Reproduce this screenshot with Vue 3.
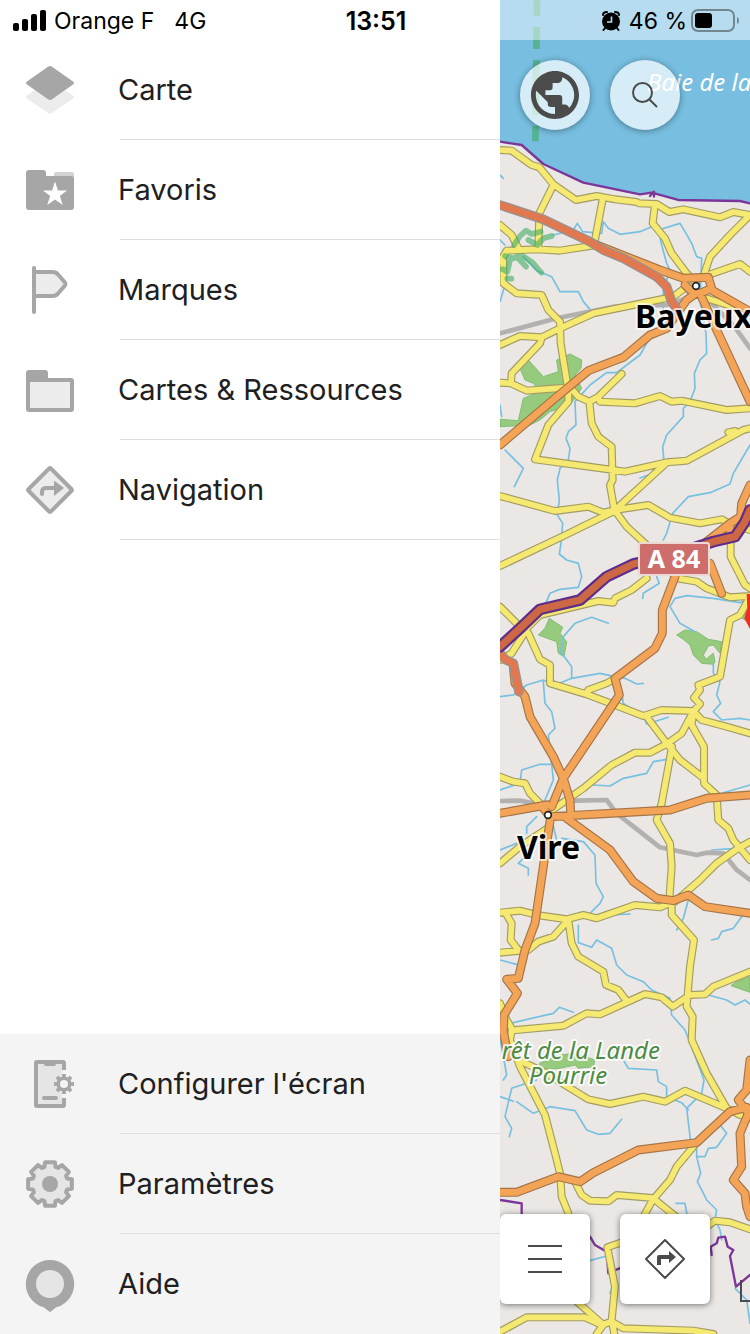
<template>
  <div class="screen">
    <header class="status-bar">
      <div class="status-left">
        <svg class="signal" viewBox="0 0 33 21" aria-hidden="true">
          <rect x="0" y="13" width="6" height="8" rx="2" />
          <rect x="9" y="9" width="6" height="12" rx="2" />
          <rect x="18" y="4" width="6" height="17" rx="2" />
          <rect x="27" y="0" width="6" height="21" rx="2" />
        </svg>
        <span>Orange F</span>
        <span class="network">4G</span>
      </div>
      <time class="clock">13:51</time>
      <div class="status-right">
        <svg class="alarm" viewBox="0 0 18 20" aria-hidden="true">
          <path d="M1 4Q1 1 5 1M17 4Q17 1 13 1M3 17L1.500 19M15 17L16.500 19" fill="none" stroke="#000" stroke-width="2" stroke-linecap="round" />
          <circle cx="9" cy="10.500" r="9" />
          <path d="M9.500 5.500V11H5" fill="none" stroke="#b9dff0" stroke-width="1.600" />
        </svg>
        <span class="charge">46 %</span>
        <svg class="battery" viewBox="0 0 48 24" aria-hidden="true">
          <rect x="1" y="1" width="42" height="21" rx="6" fill="none" stroke="#71868f" stroke-width="2" />
          <rect x="4" y="4" width="17" height="15" rx="3" />
          <path d="M46 8Q48 9 48 11.500T46 15Z" fill="#71868f" />
        </svg>
      </div>
    </header>

    <aside class="drawer">
      <nav aria-label="Menu">
        <ul class="menu">
          <li v-for="item in mainItems" :key="item.icon" class="menu-item">
            <a href="#" class="menu-link">
              <svg class="menu-icon" viewBox="0 0 48 48" aria-hidden="true">
                <template v-if="item.icon === 'layers'">
                  <path d="M26 15.500L47 29.500Q49 31 47 32.500L26 47Q24 48.500 22 47L1 32.500Q-1 31 1 29.500L22 15.500Z" fill="#ececec" />
                  <path d="M26 .8L47 15.500Q49 17 47 18.500L26 33.200Q24 34.800 22 33.200L1 18.500Q-1 17 1 15.500L22 .8Q24 -.7 26 .8Z" fill="#a6a6a6" />
                </template>
                <template v-else-if="item.icon === 'favorites'">
                  <path d="M28 14V8Q28 6 30 6H46Q48 6 48 8V14Z" fill="#d2d2d2" />
                  <path d="M3 4H17Q20 4 20 7V10H45Q48 10 48 13V41Q48 44 45 44H3Q0 44 0 41V7Q0 4 3 4Z" fill="#a6a6a6" />
                  <path d="M29 15.500L32 24.500H41L33.800 30L36.800 39L29 33.500L21.200 39L24.200 30L17 24.500H26Z" fill="#fff" />
                </template>
                <template v-else-if="item.icon === 'flag'">
                  <path d="M8 6H27Q30 6 32 8.500L39 16.500Q40 18 39 19.500L32 27.500Q30 30 27 30H8Z" class="outline" />
                  <path d="M8 2V46" class="outline" />
                </template>
                <template v-else-if="item.icon === 'folder'">
                  <path d="M3 4H19Q22 4 22 7V16H0V7Q0 4 3 4Z" fill="#a6a6a6" />
                  <rect x="2" y="14" width="44" height="30" rx="1" class="outline" />
                </template>
                <template v-else>
                  <path d="M25 2.700L45.300 23Q46.300 24 45.300 25L25 45.300Q24 46.300 23 45.300L2.700 25Q1.700 24 2.700 23L23 2.700Q24 1.700 25 2.700Z" class="outline" />
                  <path d="M16 28V26Q16 22 20 22H30" fill="none" stroke="#a6a6a6" stroke-width="4" stroke-linecap="round" />
                  <path d="M28 14.500L38 22L28 30Z" fill="#a6a6a6" />
                </template>
              </svg>
              <span>{{ item.label }}</span>
            </a>
          </li>
        </ul>
      </nav>

      <ul class="menu menu-bottom">
        <li v-for="item in bottomItems" :key="item.icon" class="menu-item">
          <a href="#" class="menu-link">
            <svg class="menu-icon" viewBox="0 0 48 48" aria-hidden="true">
              <template v-if="item.icon === 'screen'">
                <path d="M10 2H36V46H10Z" fill="#e5e5e5" />
                <path d="M38 10V3Q38 2 37 2H11Q10 2 10 3V45Q10 46 11 46H37Q38 46 38 45V38" fill="none" stroke="#a6a6a6" stroke-width="4" />
                <path d="M18 3H30V4Q30 6 28 6H20Q18 6 18 4Z" fill="#a6a6a6" />
                <path d="M18 38H30" stroke="#a6a6a6" stroke-width="4" stroke-linecap="round" />
                <path d="M36 10H40V38H36Z" fill="#f4f4f4" />
                <path :d="smallGear" fill="#a6a6a6" />
                <circle cx="38" cy="24" r="4" fill="#f4f4f4" />
              </template>
              <template v-else-if="item.icon === 'settings'">
                <path :d="bigGear" class="outline" />
                <circle cx="24" cy="24" r="8" fill="#a6a6a6" />
              </template>
              <template v-else>
                <path d="M24 0A24 24 0 0 1 31 47Q29 47.500 27.500 49.500L24 52L20.500 49.500Q19 47.500 17 47A24 24 0 0 1 24 0Z" fill="#a6a6a6" />
                <circle cx="24" cy="24" r="14" fill="#e5e5e5" />
              </template>
            </svg>
            <span>{{ item.label }}</span>
          </a>
        </li>
      </ul>
    </aside>

    <main class="map">
      <svg class="map-canvas" viewBox="0 0 250 1334" preserveAspectRatio="xMinYMin slice" role="img" aria-label="Carte">
        <!-- roads are stored at three units per map pixel -->
        <g transform="scale(.33333)">
          <rect width="750" height="4002" fill="#ebe7e4" />
          <path d="M0 0H750V608L720 603H535L455 578L420 583L250 548L130 492L65 435L0 425Z" fill="#77bee0" />
          <path d="M111 0L106 424" stroke="#54b392" stroke-width="20" stroke-dasharray="66 33" stroke-dashoffset="18" fill="none" />
          <path v-for="(d, i) in forests" :key="'f' + i" :d="d" class="forest" />
          <g class="roads">
            <path v-for="(d, i) in streams" :key="'s' + i" :d="d" stroke="#76c0e2" stroke-width="5" />
            <path v-for="(d, i) in railways" :key="'r' + i" :d="d" stroke="#b3b1b0" stroke-width="14" />
            <path :d="borders" stroke="#7b3699" stroke-width="7" />
            <path :d="minor" stroke="#a39d63" stroke-width="24" />
            <path :d="minor" stroke="#f5e971" stroke-width="17" />
            <path :d="major" stroke="#a47548" stroke-width="27" />
            <path :d="major" stroke="#f4a457" stroke-width="20" />
            <path :d="trunk" stroke="#999390" stroke-width="29" />
            <path :d="trunk" stroke="#e2784f" stroke-width="21" />
            <path :d="motorway" stroke="#5c2d8c" stroke-width="35" />
            <path :d="motorway" stroke="#cc6843" stroke-width="22" />
          </g>
          <path v-for="(d, i) in marshes" :key="'m' + i" :d="d" class="marsh" />
          <path d="M740 1782H750V1887L733 1855L742 1825Z" fill="#f02d20" />
          <circle cx="588" cy="858" r="10" class="town" />
          <circle cx="144" cy="2445" r="10" class="town" />
          <path d="M723 3840V3903H750" fill="none" stroke="#4b4b4b" stroke-width="6" />
        </g>
        <rect x="139" y="543" width="70" height="32" rx="2" fill="#cd6e6c" stroke="#ebd9d5" stroke-width="2" />
        <text x="174" y="568" class="shield">A 84</text>
        <text x="147" y="91" class="sea">Baie de la</text>
        <text x="135" y="328" class="city">Bayeux</text>
        <text x="17" y="859" class="city">Vire</text>
        <text x="160" y="1059" class="wood wood-end">rêt de la Lande</text>
        <text x="68" y="1084" class="wood wood-mid">Pourrie</text>
      </svg>

      <div class="map-controls">
        <div class="round-buttons">
          <button type="button" class="round-button" aria-label="Sources de carte">
            <svg class="globe" viewBox="2 2 20 20">
              <path d="M12 2C6.480 2 2 6.480 2 12s4.480 10 10 10 10-4.480 10-10S17.520 2 12 2zm0 17.930c-4.400 0-8-3.500-8-7.930 0-.62.08-1.210.21-1.790L9 15v1c0 1.100.9 1 2 1h1v2.930zm5.900-2.540c-.26-.81-1-1.390-1.900-1.390h-1v-3c0-.55-.45-1-1-1H8v-2h2c.55 0 1-.45 1-1V7h2c1.100 0 2-.9 2-2v-.41c2.930 1.190 5 4.060 5 7.410 0 2.080-.8 3.970-2.100 5.390z" fill="#4b4b4b" />
            </svg>
          </button>
          <button type="button" class="round-button" aria-label="Rechercher">
            <svg class="search" viewBox="0 0 26 26">
              <circle cx="10.500" cy="10.500" r="9.500" />
              <path d="M17 17L25 25" />
            </svg>
          </button>
        </div>
        <div class="square-buttons">
          <button type="button" class="square-button" aria-label="Menu">
            <svg class="burger" viewBox="0 0 34 28">
              <path d="M0 1H34M0 14H34M0 27H34" />
            </svg>
          </button>
          <button type="button" class="square-button" aria-label="Navigation">
            <svg class="directions" viewBox="0 0 40 40">
              <path d="M20 1L39 20L20 39L1 20Z" fill="none" stroke="#4b4b4b" stroke-width="2" stroke-linejoin="round" />
              <path d="M12 26V18Q12 16 14 16H24V12L31 18L24 24V20H16V26Z" fill="#4b4b4b" />
            </svg>
          </button>
        </div>
      </div>
    </main>
  </div>
</template>

<script setup>
const mainItems = [
  { icon: 'layers', label: 'Carte' },
  { icon: 'favorites', label: 'Favoris' },
  { icon: 'flag', label: 'Marques' },
  { icon: 'folder', label: 'Cartes & Ressources' },
  { icon: 'navigation', label: 'Navigation' }
]

const bottomItems = [
  { icon: 'screen', label: "Configurer l'écran" },
  { icon: 'settings', label: 'Paramètres' },
  { icon: 'help', label: 'Aide' }
]

// eight teeth, one every 45 degrees
const gearPath = (cx, cy, outer, inner, tip, base) => {
  const points = []
  for (let i = 0; i < 8; i++) {
    const steps = [[-base, inner], [-tip, outer], [tip, outer], [base, inner]]
    steps.forEach(([offset, r]) => {
      const a = ((i * 45 + offset) * Math.PI) / 180
      points.push(`${(cx + r * Math.sin(a)).toFixed(2)} ${(cy - r * Math.cos(a)).toFixed(2)}`)
    })
  }
  return 'M' + points.join('L') + 'Z'
}

const bigGear = gearPath(24, 24, 22.4, 18, 12.5, 18)
const smallGear = gearPath(38, 24, 10.2, 7.6, 11, 14)

const forests = [
  'M62 1110L85 1080L130 1130L175 1115L170 1080L210 1062L245 1080L243 1105L225 1125L245 1165L210 1215L150 1235L120 1260L90 1275L0 1280V1258L55 1262L70 1195L120 1175L100 1150L75 1140Z',
  'M115 1905L135 1885L148 1855L188 1882L180 1900L200 1925L192 1970L175 1960L170 1925Z',
  'M530 1905L555 1890L590 1895L625 1918L665 1925L660 1960L640 1935L625 1938L610 1965L618 1978L640 1960L645 1985L640 1993L605 1990L580 1965L570 1935L550 1918Z',
  'M118 3190L180 3165L225 3160L285 3180L280 3200L235 3205L225 3195L180 3205L125 3210Z',
  'M750 2930L710 2945L693 2957L750 2977Z',
  'M750 1830L720 1850L750 1870Z'
]

const marshes = [
  'M42 735L60 708L78 692L95 702L122 695M85 720L112 735L130 715L155 708',
  'M15 768L40 775L68 768L98 788L112 805L124 818M50 770L78 800M30 780L22 815L8 808',
  'M22 836L34 836'
]

const streams = [
  'M0 525L10 535',
  'M0 720L15 735M20 765L15 855L0 905M70 770L110 812L155 830L180 875L235 875L250 905L270 928',
  'M160 705L220 690L232 670L248 695L305 700L310 665L325 685L360 703L420 695L455 680L475 690L485 735L500 790L510 810L490 870L490 960L440 1030L420 1065L350 1118L320 1118L270 1155L225 1205L228 1275L205 1295L198 1315L210 1345L205 1380L180 1405L172 1440L178 1500L172 1545L188 1570L183 1630L178 1662L200 1680L235 1690L245 1730L235 1762L180 1768L150 1780L135 1815',
  'M475 690L540 670L555 695L575 730L590 770L605 775L600 900L618 1000L620 1060L600 1080L583 1120L585 1165L570 1205L550 1225L550 1250L500 1305L488 1340L492 1385',
  'M15 1350L70 1405L43 1460M750 1335L700 1420L690 1452L630 1478L565 1490L518 1540L500 1600L490 1620',
  'M420 1434L460 1420M0 1215L5 1250M470 1730L478 1750L430 1780L428 1795M510 1820L525 1795L560 1787L640 1795L720 1808L750 1798M510 1820L540 1870L585 1895',
  'M325 1870L275 1852L225 1870L190 1910L182 1955L215 2000L215 2035L300 2020L345 2030L375 2035L410 2052L430 2050M215 2035L165 2055L130 2040L80 2055L40 2085L0 2090M130 2045L135 2110L155 2135L165 2185L145 2205L155 2290L160 2340L135 2400M360 2050L370 2110L430 2150L440 2172L505 2152',
  'M0 2370L60 2350L65 2310L120 2293L155 2293M520 2275L460 2285L440 2320L370 2335L330 2358L280 2355M640 1990L640 2020L660 2045L650 2085L662 2110L640 2135L665 2160L720 2155L750 2160M665 2380L750 2355',
  'M110 2450L80 2480V2500M0 2550L50 2530M85 2625V2605L55 2590L70 2575M160 2480L170 2520M185 2515L250 2525L285 2565L288 2650L310 2690L300 2710L270 2740M330 2745L390 2742M565 2700L550 2755L530 2790M725 2750L700 2785L665 2795L655 2815L635 2820M635 2550L710 2545M235 2775V2828L275 2842L290 2820L335 2845L350 2895L380 2925L430 2945L455 2970L510 2995L515 3045L555 3090L575 3140L612 3240L605 3280L560 3325L575 3450',
  'M0 2880L50 2893M30 3070L160 3040L178 3022L220 3037M625 2985L680 3000L705 3015L735 3000L750 3012M330 3165L370 3180L385 3205L470 3210L475 3245L500 3260L500 3290L545 3308L565 3330',
  'M0 3115L10 3170L20 3225L10 3240M110 3240L35 3265L15 3350L35 3385L28 3410M0 3290L40 3304M50 3305L100 3340L150 3320L225 3332L260 3390L295 3403L330 3400L365 3358M590 3430V3470H615L625 3445L650 3442L680 3400L660 3375M590 3470L602 3520L592 3545L605 3570L620 3600L650 3630L645 3660L660 3690L665 3720M528 3610H555L562 3650M270 3782L320 3768M340 3850L330 3880M705 3865L740 3900L750 3970'
]

const railways = [
  'M0 1000L170 955L340 920L500 915L590 885',
  'M620 895L700 975L750 1045',
  'M0 2403L60 2402L100 2410L230 2402L320 2400L350 2440L480 2542L590 2565L620 2558L670 2560L710 2610L750 2640'
]

const borders = 'M0 425L65 435L130 492L250 548L420 583L455 578L535 600L720 603L750 610M450 588L462 575V590M0 3600L65 3610V3650M270 3710L285 3735L320 3755L325 3820L370 3800M635 3765L632 3740L650 3730L655 3713L675 3710L683 3740L700 3750L690 3768L708 3860L750 3825'

const minor = [
  'M0 450L35 452L95 495L118 502L160 553L228 600L290 588L345 598L410 606M418 610L470 612L508 636L550 628L660 652L700 636L750 645',
  'M160 555L118 640L115 740M308 598L285 720M465 612L458 670L495 715L515 760L560 820L588 850M750 645L690 705L630 770L610 830L720 792L750 815',
  'M0 675L35 705L55 745M0 785L20 752L110 748L180 752L290 735M10 785V850L50 880L125 885L145 930L180 965L182 1030L203 1160',
  'M0 1035L60 1008L125 1012L180 985L280 940L400 915L520 890L560 860M125 1012L120 1030L35 1120L33 1150M0 1148L33 1150L80 1172L210 1162L235 1190L268 1205L295 1190L365 1122',
  'M295 1195L300 1205L405 1210L480 1188L515 1205L545 1202L680 1230L750 1225M205 1165V1205L145 1275L105 1378L340 1410L375 1415L500 1387L560 1382L730 1290L750 1285',
  'M268 1205L275 1270L295 1310L335 1340L338 1440L330 1455L343 1530M500 1388L345 1530M0 1488L165 1533L265 1520L310 1538L345 1530L445 1515L510 1553L600 1570L665 1558L690 1572L750 1590',
  'M0 1698L190 1608L345 1532L380 1580L440 1635L530 1735L590 1745L620 1765L690 1792L750 1788M692 1580V1670L735 1755L750 1765M620 895L700 920M685 1297L705 1293',
  'M440 1735L395 1770L345 1795L340 1808L295 1803L120 1845L85 1880L35 1960L0 1980M0 1820L60 1880L85 1900L120 1978L150 1995V2050L260 2083L345 2115L430 2148L485 2130L580 2133L605 2160L680 2180L750 2200',
  'M260 2080L265 2070L320 2050L345 2035M745 1800L720 1845L690 1860L660 2030L595 2055L600 2070L582 2093L600 2112L580 2135L545 2200L500 2232L450 2258H405L335 2295L250 2365L200 2400L150 2435',
  'M440 2150L500 2230L540 2280L605 2330M580 2135L575 2175L612 2240V2350L650 2385L655 2460L685 2485L700 2520L750 2580M516 2240L485 2410L470 2460L510 2530L515 2600L508 2700',
  'M0 2330L40 2345L75 2350L90 2380L125 2415M0 2590L60 2540L150 2480M750 2525L710 2548L650 2590L600 2640L525 2705',
  'M0 2738L60 2732L110 2745L200 2758L250 2745L290 2755L405 2715L480 2722L520 2705M20 2745L35 2770L32 2820L55 2850M0 2858L85 2850L115 2825L160 2810L205 2760L215 2830L235 2870L310 2915L318 2955L355 2970L380 3003',
  'M515 2710V2745L582 2820L570 2900L560 3020L578 3050L575 3120L620 3220L680 3325M0 3010L20 3060L38 3091L190 3077L260 3040L300 3043L435 2982L485 2992L518 3020L570 2985L615 2983L640 2960L750 2915',
  'M35 3092L30 3120L60 3200L135 3345L165 3460L180 3520L185 3590L205 3640V3680M55 3180L130 3215L265 3298L330 3312L430 3290L495 3305L555 3272L680 3325L720 3345L750 3350',
  'M580 3440L530 3500L510 3540L458 3600L425 3660M225 3545L245 3585L270 3602L325 3604L350 3585L458 3594L540 3660M620 3680L645 3662L690 3667L750 3688',
  'M370 3725L322 3742L345 3860L335 3960L343 4002M0 3995L80 3952L255 3952L305 3975L335 3965L370 3985L580 3992L640 4002M225 3900L310 3975L290 4002'
].join('')

const major = [
  'M0 1335L165 1195L265 1112L370 1072L450 1005L500 985L560 900L588 880M290 735L480 810L550 835L625 832L635 865L600 880L570 870L555 855M635 870L750 935M600 880L650 990L750 1205',
  'M750 1455L725 1510L722 1550L690 1570L620 1625M690 1570V1610M630 1690L665 1780M525 1730L487 1830V1900L465 1945L345 2035L358 2085L190 2335L155 2420',
  'M40 2000L45 2050L75 2090L90 2150L160 2270L190 2335L210 2400L212 2440L200 2455M0 2440L140 2415M125 2418L150 2450L510 2430L620 2395L750 2385',
  'M200 2455L330 2550L400 2645L470 2695L520 2702L565 2685L615 2720L750 2740M152 2450L105 2770L75 2850L55 2935L20 2938L52 2980L12 3045L10 3095L25 3170',
  'M0 3577L50 3577L175 3530L240 3545L280 3518L415 3450L590 3428L690 3335L740 3322L750 3330M750 3180L740 3270L715 3300L745 3340L720 3400L725 3500L700 3540L735 3580L740 3620L750 3650'
].join('')

const trunk = 'M0 615L130 658L270 725L310 750L370 775L470 830L500 860L515 905L535 935M0 1960L15 1978L40 1990L57 2075'
const motorway = 'M0 1940L60 1885L120 1828L240 1800L320 1730L400 1692L500 1670L640 1625L705 1610L735 1565L750 1530'
</script>

<style>
body {
  margin: 0;
  background: #ffffff;
}
</style>

<style scoped>
.screen {
  min-height: 100vh;
  display: grid;
  grid-template-columns: 2fr 1fr;
  grid-template-rows: 40px 1fr;
  font-family: Inter, 'Liberation Sans', sans-serif;
  color: #202020;
  overflow: hidden;
}

.status-bar {
  grid-column: 1 / 3;
  grid-row: 1;
  z-index: 2;
  display: grid;
  grid-template-columns: 1fr auto 1fr;
  align-items: center;
  padding: 1px 11px 0 13px;
  background: rgba(255, 255, 255, 0.47);
  font-size: 23px;
  color: #000000;
}

.status-left,
.status-right {
  display: flex;
  align-items: center;
  gap: 8px;
  white-space: nowrap;
}

.status-right {
  justify-content: flex-end;
}

.signal {
  width: 33px;
  height: 21px;
}

.network {
  margin-left: 12px;
}

.clock {
  font-size: 25px;
  font-weight: 600;
}

.alarm {
  width: 20px;
  height: 20px;
}

.battery {
  width: 48px;
  height: 24px;
  margin-left: -4px;
}

.drawer {
  grid-column: 1;
  grid-row: 1 / 3;
  padding-top: 40px;
  display: flex;
  flex-direction: column;
  justify-content: space-between;
  background: #ffffff;
}

.menu {
  list-style: none;
  margin: 0;
  padding: 0;
}

.menu-bottom {
  background: #f4f4f4;
}

.menu-item {
  height: 100px;
  display: flex;
  flex-direction: column;
}

.menu-item::after {
  content: '';
  height: 1px;
  margin-left: 120px;
  background: #dfdfdf;
}

.menu-bottom .menu-item:last-child::after {
  background: transparent;
}

.menu-link {
  flex: 1;
  display: flex;
  align-items: center;
  gap: 44px;
  padding-left: 26px;
  font-size: 29px;
  color: inherit;
  text-decoration: none;
  white-space: nowrap;
}

.menu-icon {
  width: 48px;
  height: 48px;
  overflow: visible;
}

.outline {
  fill: #ececec;
  stroke: #a6a6a6;
  stroke-width: 4;
  stroke-linecap: round;
  stroke-linejoin: round;
}

.menu-bottom .outline {
  fill: #e5e5e5;
}

.map {
  grid-column: 2;
  grid-row: 1 / 3;
  display: grid;
  overflow: hidden;
}

.map-canvas,
.map-controls {
  grid-area: 1 / 1;
  width: 100%;
  height: 100%;
}

.forest {
  fill: #96cb7e;
  stroke: #80bd72;
  stroke-width: 3;
}

.marsh {
  fill: none;
  stroke: #3fae62;
  stroke-width: 17;
  stroke-linecap: round;
  stroke-linejoin: round;
  opacity: 0.6;
}

.roads {
  fill: none;
  stroke-linecap: round;
  stroke-linejoin: round;
}

.town {
  fill: #ffffff;
  stroke: #222222;
  stroke-width: 5;
}

.map-canvas text {
  font-family: 'Noto Sans', sans-serif;
  font-size: 24px;
  paint-order: stroke;
  stroke-linejoin: round;
}

.map-canvas .city {
  font-size: 32px;
  font-weight: 700;
  fill: #000000;
  stroke: rgba(255, 255, 255, 0.7);
  stroke-width: 4px;
}

.map-canvas .shield {
  font-size: 25px;
  font-weight: 700;
  fill: #ffffff;
  text-anchor: middle;
}

.map-canvas .sea {
  font-style: italic;
  fill: #ffffff;
}

.map-canvas .wood {
  font-style: italic;
  fill: #4c8b43;
  stroke: rgba(255, 255, 255, 0.85);
  stroke-width: 4px;
}

.wood-end {
  text-anchor: end;
}

.wood-mid {
  text-anchor: middle;
}

.map-controls {
  z-index: 1;
  box-sizing: border-box;
  padding: 60px 0 30px;
  display: flex;
  flex-direction: column;
  justify-content: space-between;
}

.round-buttons {
  display: flex;
  gap: 20px;
  padding-left: 20px;
}

.square-buttons {
  display: flex;
  gap: 30px;
}

.round-button,
.square-button {
  display: flex;
  align-items: center;
  justify-content: center;
  padding: 0;
  border: 0;
}

.round-button {
  width: 70px;
  height: 70px;
  border-radius: 50%;
  background: rgba(255, 255, 255, 0.7);
  box-shadow: 0 1px 6px rgba(0, 0, 0, 0.4);
}

.square-button {
  width: 90px;
  height: 90px;
  border-radius: 6px;
  background: #ffffff;
  box-shadow: 0 1px 6px rgba(0, 0, 0, 0.5);
}

.globe {
  width: 48px;
  height: 48px;
}

.search {
  width: 26px;
  height: 26px;
  fill: none;
  stroke: #4b4b4b;
  stroke-width: 2;
}

.burger {
  width: 34px;
  height: 28px;
  stroke: #4b4b4b;
  stroke-width: 2;
}

.directions {
  width: 40px;
  height: 40px;
}
</style>
